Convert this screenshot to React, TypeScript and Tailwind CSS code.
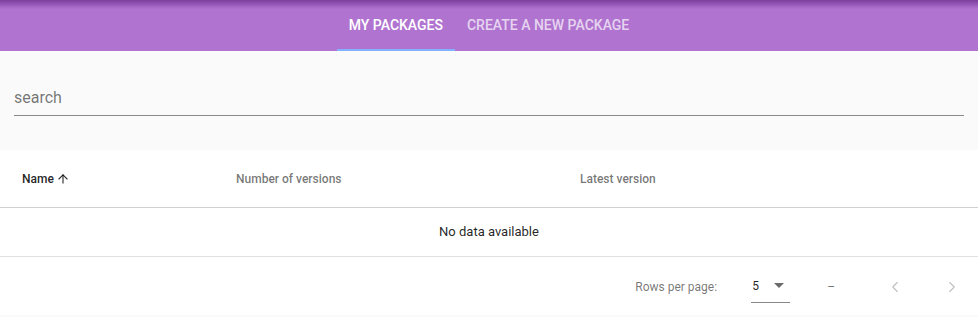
import { ArrowUp, ChevronLeft, ChevronRight } from "lucide-react";

export default function App() {
  return (
    <div className="w-[978px] h-[317px] bg-[#fafafa] overflow-hidden font-['Roboto',sans-serif]">
      {/* top nav */}
      <div className="relative h-[51px] bg-[#b074d0]">
        <div className="absolute inset-x-0 top-0 h-[9px] bg-gradient-to-b from-[#7a3f9d] via-[#9658b8] to-[#b074d0]" />
        <div className="relative flex justify-center h-full">
          <div className="flex h-full">
            <div className="relative flex items-center px-[12px] h-full text-[14px] font-medium text-white">
              MY PACKAGES
              <div className="absolute left-0 right-0 bottom-0 h-[2px] bg-[#82b1ff]" />
            </div>
            <div className="flex items-center px-[12px] h-full text-[14px] font-medium text-white/70">
              CREATE A NEW PACKAGE
            </div>
          </div>
        </div>
      </div>

      {/* search */}
      <div className="h-[99px] px-[14px] pt-[37px] bg-[#fafafa]">
        <div className="border-b border-[#8a8a8a] h-[28px] text-[16px] text-black/55 leading-[20px]">
          search
        </div>
      </div>

      {/* table */}
      <div className="bg-white">
        <div className="grid grid-cols-[212px_344px_1fr] h-[58px] items-center text-[12px] font-medium border-b border-[#d0d0d0]">
          <div className="pl-[22px] flex items-center gap-[2px] text-black/87">
            Name
            <ArrowUp size={14} strokeWidth={2} className="text-black/80" />
          </div>
          <div className="pl-[24px] text-black/55">Number of versions</div>
          <div className="pl-[24px] text-black/55">Latest version</div>
        </div>
        <div className="h-[49px] flex items-center justify-center text-[13px] text-black/87 border-b border-[#e0e0e0]">
          No data available
        </div>
        <div className="h-[58px] pt-[2px] flex items-center justify-end text-[12px] text-black/55">
          <span>Rows per page:</span>
          <div className="ml-[34px] w-[39px] h-[30px] mt-[2px] border-b border-[#888] flex items-start pt-[4px] text-black/87">
            <span className="ml-[1px]">5</span>
            <svg width="10" height="5" viewBox="0 0 10 5" className="ml-[15px] mt-[6px]">
              <path d="M0 0 L10 0 L5 5 Z" fill="#6b6b6b" />
            </svg>
          </div>
          <span className="ml-[37px]">–</span>
          <ChevronLeft size={18} strokeWidth={1.5} className="ml-[51px] text-black/25" />
          <ChevronRight size={18} strokeWidth={1.5} className="ml-[39px] mr-[17px] text-black/25" />
        </div>
      </div>
    </div>
  );
}
